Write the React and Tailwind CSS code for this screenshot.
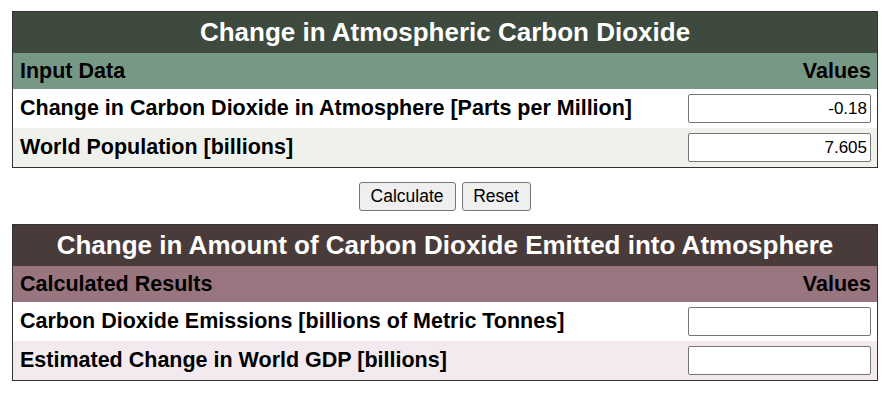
import React from "react";

function Table({ title, sub, rows, c }) {
  return (
    <div className="ml-[12px] w-[866px] border border-[#333333]">
      <div className={`h-[41px] flex items-center justify-center text-white font-bold text-[26px] ${c.title}`}>
        {title}
      </div>
      <div className={`h-[36px] flex items-center justify-between px-[6px] text-[21.5px] font-bold text-black ${c.sub}`}>
        <span className="pl-[1px]">{sub}</span>
        <span>Values</span>
      </div>
      {rows.map((r, i) => (
        <div
          key={i}
          className={`h-[39px] flex items-center justify-between pl-[7px] pr-[6px] text-[21.5px] font-bold text-black ${i % 2 === 1 ? c.alt : "bg-white"}`}
        >
          <span>{r.label}</span>
          <input
            readOnly
            value={r.value}
            className="w-[183px] h-[29px] border border-[#767676] rounded-[2px] bg-white text-right px-[3px] text-[17px] font-normal text-black outline-none"
            style={{ fontFamily: "'Liberation Sans', Arial, sans-serif" }}
          />
        </div>
      ))}
    </div>
  );
}

export default function App() {
  return (
    <div className="w-[888px] h-[393px] bg-white pt-[11px]" style={{ fontFamily: "'Liberation Sans', Arial, sans-serif" }}>
      <Table
        title="Change in Atmospheric Carbon Dioxide"
        sub="Input Data"
        c={{ title: "bg-[#3e4a3e]", sub: "bg-[#789886]", alt: "bg-[#eff2ec]" }}
        rows={[
          { label: "Change in Carbon Dioxide in Atmosphere [Parts per Million]", value: "-0.18" },
          { label: "World Population [billions]", value: "7.605" },
        ]}
      />
      <div className="flex justify-center gap-[6px] mt-[14px] mb-[13px] pl-[1px]">
        <button className="h-[29px] w-[97px] bg-[#efefef] border border-[#767676] rounded-[3px] text-[17.5px] text-black">
          Calculate
        </button>
        <button className="h-[29px] w-[69px] bg-[#efefef] border border-[#767676] rounded-[3px] text-[17.5px] text-black">
          Reset
        </button>
      </div>
      <Table
        title="Change in Amount of Carbon Dioxide Emitted into Atmosphere"
        sub="Calculated Results"
        c={{ title: "bg-[#4a3b3b]", sub: "bg-[#98757f]", alt: "bg-[#f3eaef]" }}
        rows={[
          { label: "Carbon Dioxide Emissions [billions of Metric Tonnes]", value: "" },
          { label: "Estimated Change in World GDP [billions]", value: "" },
        ]}
      />
    </div>
  );
}
